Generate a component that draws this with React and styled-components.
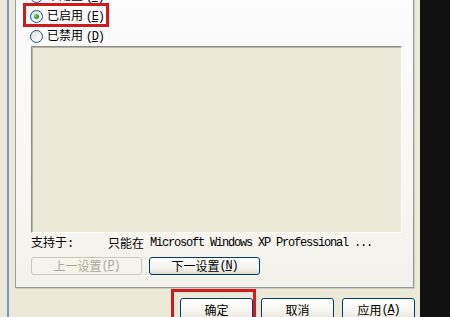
import React from "react";
import styled, { createGlobalStyle } from "styled-components";

const Global = createGlobalStyle`
  html, body { margin: 0; padding: 0; background: #111; }
  body { font-family: "Noto Sans CJK SC", "Liberation Sans", sans-serif; font-size: 12px; color: #000; }
  * { box-sizing: border-box; }
`;

const Root = styled.div`
  width: 450px;
  height: 317px;
  display: flex;
  overflow: hidden;
  background: #111;
`;

const Window = styled.div`
  position: relative;
  width: 420px;
  height: 317px;
  flex: none;
  background: #ece9d8;
  padding-left: 7px;
  display: flex;
`;

const Frame = styled.div`
  flex: 1;
  border-left: 2px solid #7a96da;
  padding: 0 6px 0 6px;
  display: flex;
  flex-direction: column;
  margin-top: -20px;
`;

const Panel = styled.div`
  width: 399px;
  border: 1px solid #919b9c;
  box-shadow: 1px 1px 0 #d0cdbf;
  background: linear-gradient(180deg, #fcfcfe 0%, #f7f6f2 70%, #f2f1ea 100%);
  padding: 5px 10px 12px 15px;
  display: flex;
  flex-direction: column;
`;

const RadioRow = styled.label`
  height: 20px;
  display: flex;
  align-items: center;
  gap: 4px;
  margin-left: -1px;
  line-height: 1;
  white-space: nowrap;
`;

const RadioDot = styled.span`
  width: 13px;
  height: 13px;
  border-radius: 50%;
  border: 1px solid #1c5180;
  background: linear-gradient(135deg, #dcdcd7 0%, #f4f4f0 60%, #ffffff 100%);
  display: flex;
  align-items: center;
  justify-content: center;
  flex: none;
  &::after {
    content: "";
    display: ${(p) => (p.$checked ? "block" : "none")};
    width: 5px;
    height: 5px;
    border-radius: 50%;
    background: radial-gradient(circle at 35% 35%, #7fe07f 0%, #21a121 55%, #1a7a1a 100%);
  }
`;

const Mono = styled.span`
  font-family: "Liberation Mono", "DejaVu Sans Mono", monospace;
  font-size: 12px;
  letter-spacing: -1.2px;
`;

const Key = styled.u`
  text-underline-offset: 1px;
`;

const EditBox = styled.div`
  width: 371px;
  height: 187px;
  background: #ece9d8;
  border-top: 1px solid #8e8d86;
  border-left: 1px solid #8e8d86;
  border-right: 1px solid #ffffff;
  border-bottom: 1px solid #ffffff;
  box-shadow: inset 1px 1px 0 #b6b4a8;
`;

const SupportRow = styled.div`
  height: 20px;
  display: flex;
  align-items: center;
  white-space: nowrap;
  line-height: 1;
`;

const SupportLabel = styled.span`
  width: 77px;
  flex: none;
`;

const NavRow = styled.div`
  margin-top: 4px;
  display: flex;
  gap: 7px;
`;

const XpButton = styled.button`
  width: ${(p) => p.$w}px;
  height: ${(p) => p.$h}px;
  padding: 0;
  font-family: "Noto Sans CJK SC", "Liberation Sans", sans-serif;
  font-size: 12px;
  line-height: 1;
  color: ${(p) => (p.disabled ? "#aca899" : "#000")};
  border: 1px solid ${(p) => (p.disabled ? "#c9c7ba" : "#003c74")};
  border-radius: 3px;
  background: ${(p) =>
    p.disabled
      ? "#f5f4ea"
      : "linear-gradient(180deg, #ffffff 0%, #f5f4ef 60%, #e9e7de 88%, #d6d0c5 100%)"};
  display: flex;
  align-items: center;
  justify-content: center;
  white-space: nowrap;
`;

const ButtonBar = styled.div`
  margin-top: 10px;
  margin-right: -1px;
  display: flex;
  justify-content: flex-end;
  gap: 8px;
`;

const RedBox = styled.div`
  position: absolute;
  left: ${(p) => p.$x}px;
  top: ${(p) => p.$y}px;
  width: ${(p) => p.$w}px;
  height: ${(p) => p.$h}px;
  border: 3px solid #d21a1d;
  pointer-events: none;
`;

const Backdrop = styled.div`
  flex: 1;
  background: #111;
`;

function Radio({ checked, label, k }) {
  return (
    <RadioRow>
      <RadioDot $checked={checked} />
      <span>
        {label} <Mono>(<Key>{k}</Key>)</Mono>
      </span>
    </RadioRow>
  );
}

export default function App() {
  return (
    <>
      <Global />
      <Root>
        <Window>
          <Frame>
            <Panel>
              <Radio label="未配置" k="C" />
              <Radio checked label="已启用" k="E" />
              <Radio label="已禁用" k="D" />
              <EditBox />
              <SupportRow>
                <SupportLabel>
                  支持于<Mono>:</Mono>
                </SupportLabel>
                <span>只能在</span>
                <Mono>&nbsp;Microsoft Windows XP Professional ...</Mono>
              </SupportRow>
              <NavRow>
                <XpButton disabled $w={111} $h={18}>
                  上一设置<Mono>(<Key>P</Key>)</Mono>
                </XpButton>
                <XpButton $w={111} $h={18}>
                  下一设置<Mono>(<Key>N</Key>)</Mono>
                </XpButton>
              </NavRow>
            </Panel>
            <ButtonBar>
              <XpButton $w={73} $h={23}>确定</XpButton>
              <XpButton $w={73} $h={23}>取消</XpButton>
              <XpButton $w={73} $h={23}>
                应用<Mono>(<Key>A</Key>)</Mono>
              </XpButton>
            </ButtonBar>
          </Frame>
          <RedBox $x={23} $y={3} $w={86} $h={24} />
          <RedBox $x={171} $y={289} $w={85} $h={40} />
        </Window>
        <Backdrop />
      </Root>
    </>
  );
}
